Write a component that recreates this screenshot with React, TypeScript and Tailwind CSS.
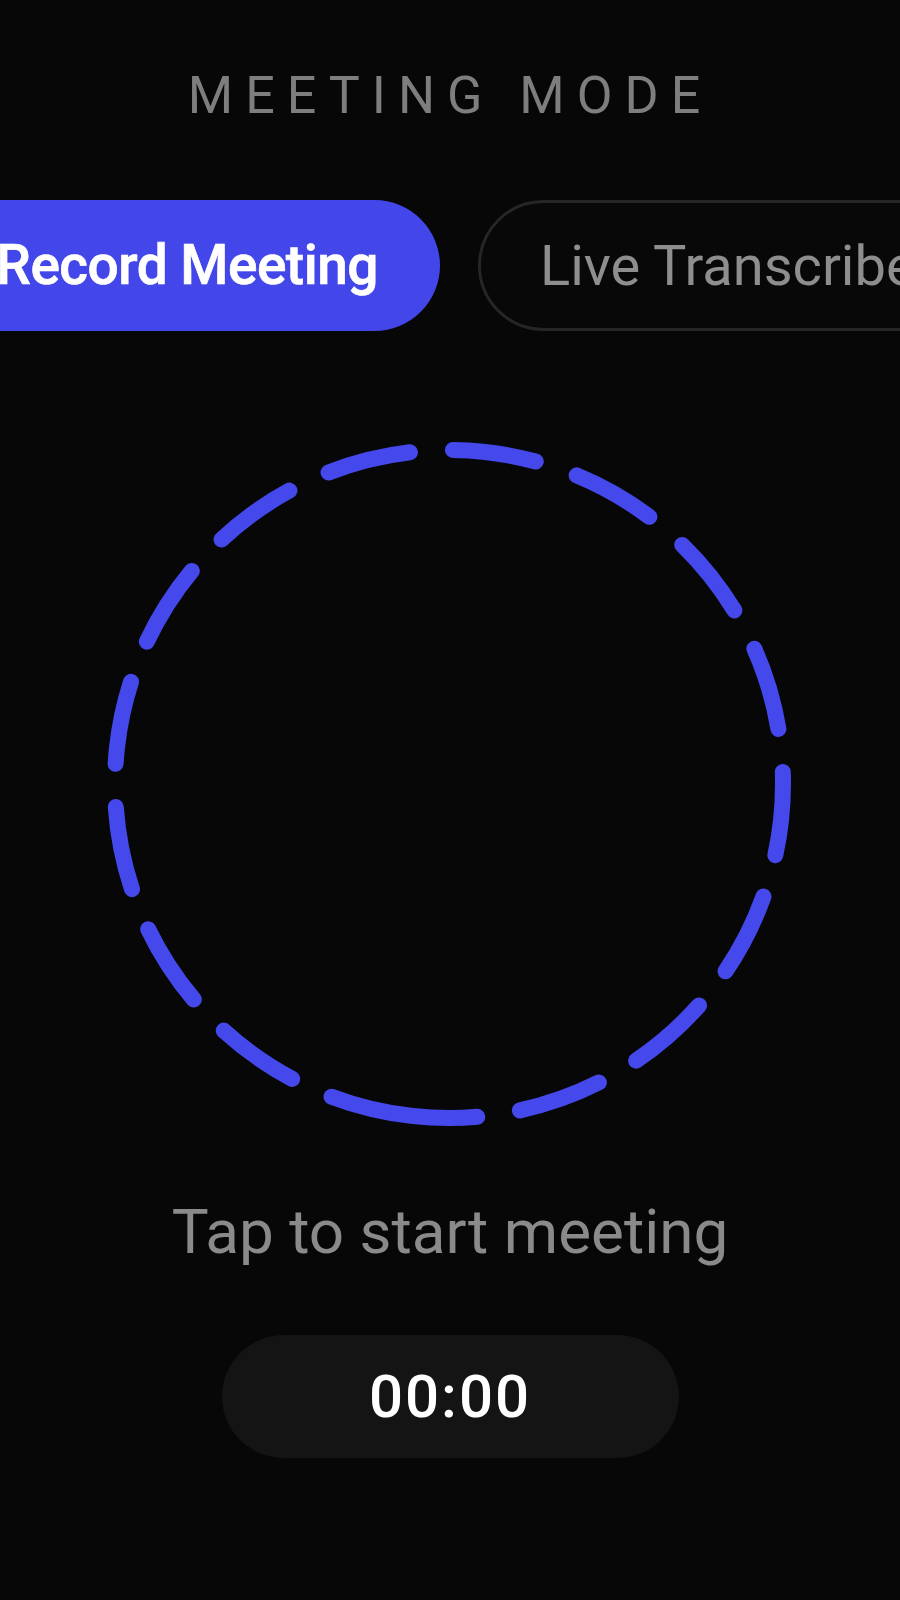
const font = { fontFamily: "Roboto, 'Noto Sans', sans-serif" };

function DashedRing() {
  return (
    <svg width="700" height="700" viewBox="0 0 700 700" className="mx-auto mt-[102px] block">
      <circle
        cx="349"
        cy="351"
        r="334"
        fill="none"
        stroke="#4549ec"
        strokeWidth="16"
        strokeLinecap="round"
        strokeDasharray="83.94 43.14"
        transform="rotate(96.2 349 351)"
      />
    </svg>
  );
}

export default function App() {
  return (
    <div className="min-h-[1600px] w-full overflow-hidden bg-[#070707]" style={font}>
      <h1 className="pt-[70px] text-center text-[52px] font-normal leading-none tracking-[12px] text-[#7e7e7e]">
        MEETING MODE
      </h1>

      <div className="mt-[78px] flex gap-[38px] overflow-hidden">
        <div className="flex w-[440px] shrink-0 justify-end">
          <button className="flex h-[131px] shrink-0 items-center whitespace-nowrap rounded-full bg-[#4347ea] px-[62px] text-[55px] font-medium leading-none tracking-[-0.5px] text-white [-webkit-text-stroke:0.7px_white]">
            Record Meeting
          </button>
        </div>
        <button className="flex h-[131px] shrink-0 items-center whitespace-nowrap rounded-full border-[3px] border-[#262626] bg-[#080808] px-[59px] text-[56px] font-normal leading-none text-[#8e8e8e]">
          Live Transcribe
        </button>
      </div>

      <DashedRing />

      <p className="mt-[68px] text-center text-[62px] font-normal leading-none text-[#8a8a8a]">
        Tap to start meeting
      </p>

      <div className="mx-auto mt-[72px] flex h-[123px] w-[457px] items-center justify-center rounded-full bg-[#141414]">
        <span className="text-[60px] font-medium leading-none tracking-[2px] text-white">00:00</span>
      </div>
    </div>
  );
}
